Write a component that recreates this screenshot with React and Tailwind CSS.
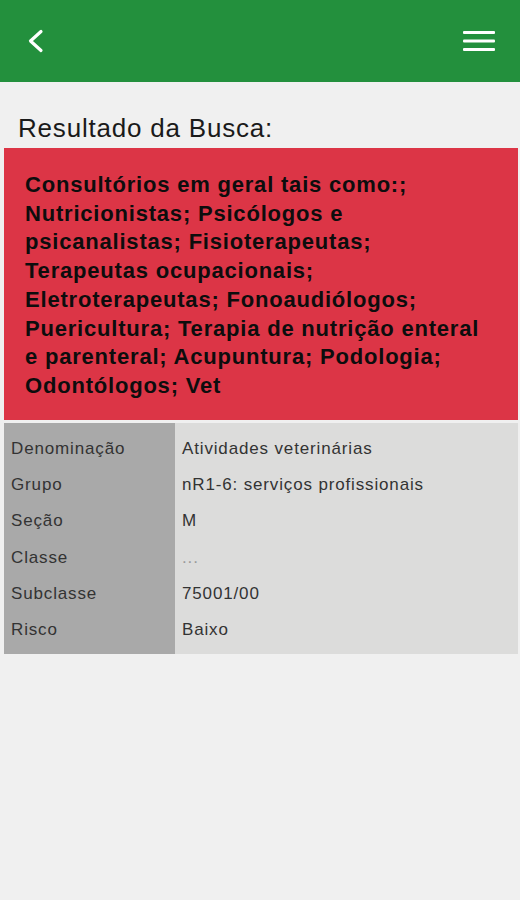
const rows = [
  ['Denominação', 'Atividades veterinárias'],
  ['Grupo', 'nR1-6: serviços profissionais'],
  ['Seção', 'M'],
  ['Classe', '...'],
  ['Subclasse', '75001/00'],
  ['Risco', 'Baixo'],
];

const lines = [
  'Consultórios em geral tais como:;',
  'Nutricionistas; Psicólogos e',
  'psicanalistas; Fisioterapeutas;',
  'Terapeutas ocupacionais;',
  'Eletroterapeutas; Fonoaudiólogos;',
  'Puericultura; Terapia de nutrição enteral',
  'e parenteral; Acupuntura; Podologia;',
  'Odontólogos; Vet',
];

export default function App() {
  return (
    <div
      className="w-[520px] h-[900px] bg-[#f0f0f0] text-[#111]"
      style={{ fontFamily: '"Liberation Sans", Arial, sans-serif' }}
    >
      {/* Header */}
      <div className="h-[82px] bg-[#23903d] flex items-center justify-between pl-[27px] pr-[25px]">
        <svg width="18" height="24" viewBox="0 0 18 24" fill="none">
          <polyline
            points="14,2.5 3.5,12 14,21.5"
            stroke="white"
            strokeWidth="3.2"
            strokeLinecap="round"
            strokeLinejoin="round"
          />
        </svg>
        <svg width="32" height="24" viewBox="0 0 32 24">
          <rect x="0" y="2" width="32" height="3" rx="1" fill="white" />
          <rect x="0" y="10.5" width="32" height="3" rx="1" fill="white" />
          <rect x="0" y="19" width="32" height="3" rx="1" fill="white" />
        </svg>
      </div>

      {/* Title */}
      <div className="pl-[18px] pt-[32px] pb-[6px] text-[26px] leading-[28px] tracking-[0.8px] text-[#1a1a1a]">
        Resultado da Busca:
      </div>

      {/* Result */}
      <div className="ml-[4px] mr-[2px] bg-[#dc3546] px-[21px] pt-[23px] pb-[19px]">
        <p className="font-bold text-[22px] leading-[28.7px] tracking-[0.8px] text-[#0d0d0d]">
          {lines.map((line) => (
            <span key={line} className="block whitespace-nowrap">
              {line}
            </span>
          ))}
        </p>
      </div>

      {/* Table */}
      <div className="ml-[4px] mr-[2px] mt-[3px] flex bg-[#dcdcdb]">
        <div className="w-[171px] bg-[#a9a9a9] pt-[8px] pb-[6px]">
          {rows.map(([label]) => (
            <div
              key={label}
              className="h-[36.2px] flex items-center pl-[7px] text-[17px] tracking-[0.85px] text-[#333]"
            >
              {label}
            </div>
          ))}
        </div>
        <div className="flex-1 pt-[8px] pb-[6px]">
          {rows.map(([label, value]) => (
            <div
              key={label}
              className={`h-[36.2px] flex items-center pl-[7px] text-[17px] tracking-[0.85px] ${value === '...' ? 'text-[#9a9a9a]' : 'text-[#333]'}`}
            >
              {value}
            </div>
          ))}
        </div>
      </div>
    </div>
  );
}
